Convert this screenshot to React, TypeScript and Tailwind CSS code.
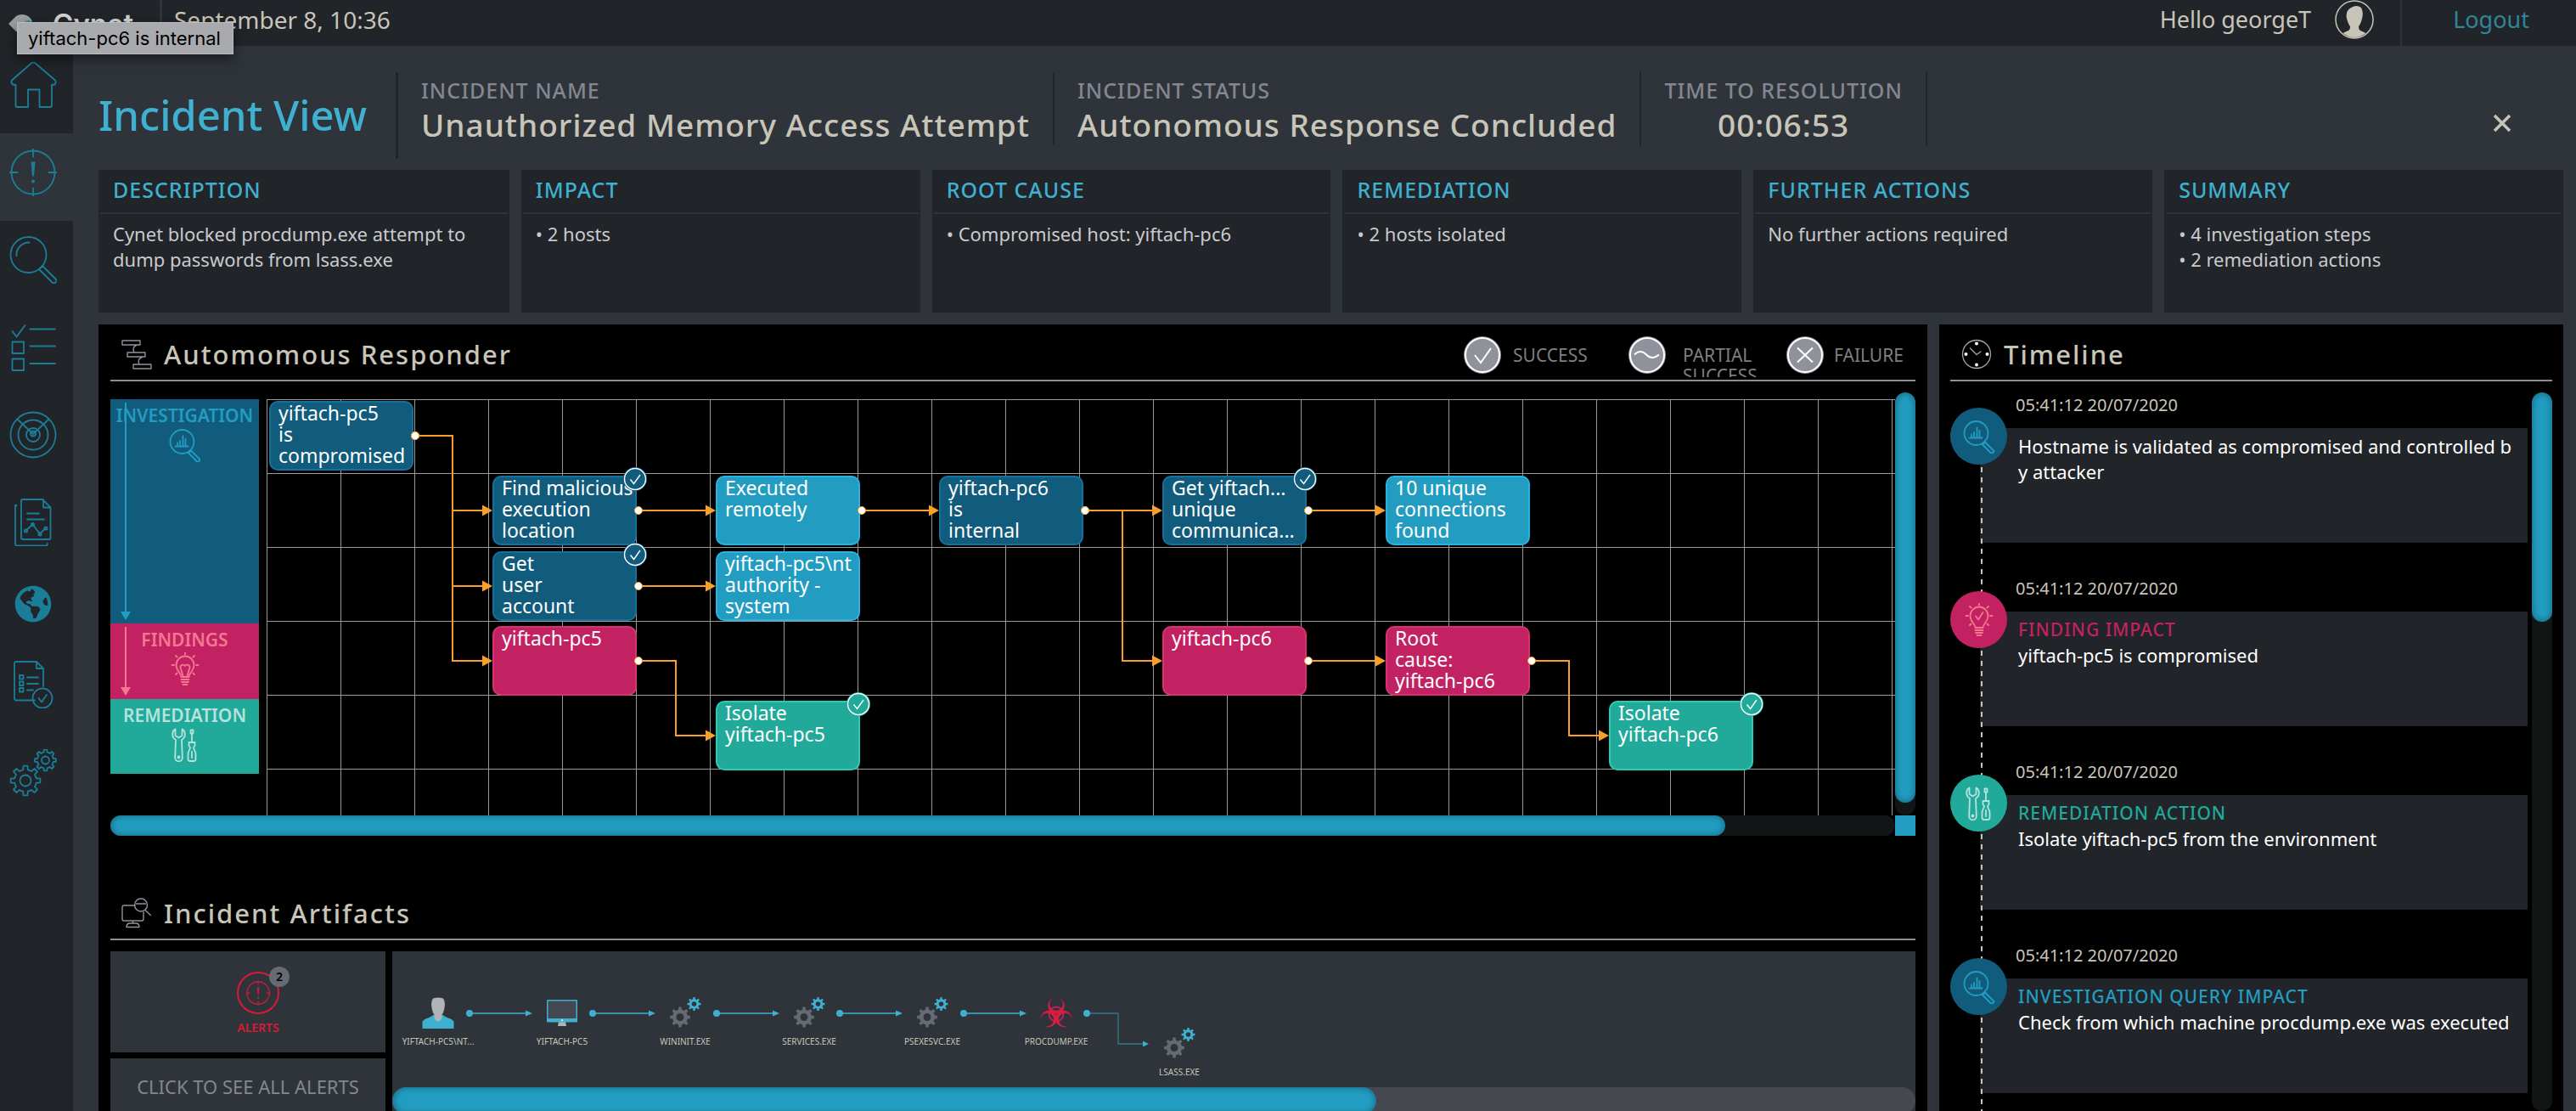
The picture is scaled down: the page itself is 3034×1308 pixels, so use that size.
import type { ReactNode } from "react";
import { FaGlobeAmericas } from "react-icons/fa";

/* ---------- icons ---------- */

function gearPath(cx: number, cy: number, outer: number, inner: number, teeth: number) {
  const step = (Math.PI * 2) / teeth;
  const point = (r: number, a: number) =>
    `${(cx + r * Math.sin(a)).toFixed(2)} ${(cy - r * Math.cos(a)).toFixed(2)}`;
  let d = "";
  for (let i = 0; i < teeth; i++) {
    const a = i * step;
    d += `${i === 0 ? "M" : "L"}${point(inner, a - step * 0.27)}`;
    d += `L${point(outer, a - step * 0.18)}L${point(outer, a + step * 0.18)}`;
    d += `L${point(inner, a + step * 0.27)}`;
    d += `A${inner} ${inner} 0 0 1 ${point(inner, a + step * 0.73)}`;
  }
  return d + "Z";
}

function ring(cx: number, cy: number, r: number) {
  return `M${cx - r} ${cy}a${r} ${r} 0 1 0 ${2 * r} 0a${r} ${r} 0 1 0 ${-2 * r} 0Z`;
}

function LineIcon({ children, box = 56, className }: { children: ReactNode; box?: number; className: string }) {
  return (
    <svg
      viewBox={`0 0 ${box} ${box}`}
      className={className}
      fill="none"
      stroke="currentColor"
      strokeWidth="1.8"
      strokeLinecap="round"
      strokeLinejoin="round"
      aria-hidden="true"
    >
      {children}
    </svg>
  );
}

function TargetShape() {
  return (
    <>
      <circle cx="28" cy="28" r="25.5" />
      <path d="M28 0.5v9M28 46.500v9M0.500 28h9M46.500 28h9" />
      <path d="M25.500 15.500h5l-1.500 17h-2z" fill="currentColor" stroke="none" />
      <circle cx="28" cy="38.500" r="2" fill="currentColor" stroke="none" />
    </>
  );
}

function ChartLensShape() {
  return (
    <>
      <circle cx="16.500" cy="16" r="14" />
      <path d="M8.500 21.500h15M11 20v-2.500M14 20v-5M17.500 20V9.500M20.500 20v-7" />
      <path d="M27 26.500l9.500 9.500a2 2 0 0 1-3 3L24 29.500z" />
    </>
  );
}

function BulbShape({ check = false }: { check?: boolean }) {
  return (
    <>
      <path d="M15.500 29c0-5-6-6.500-6-14a10.500 10.500 0 0 1 21 0c0 7.500-6 9-6 14z" />
      <path d="M15.500 32h9M16 35h8M17.500 38h5" />
      <path d="M20 2.500v-2.500M7 15H4.500M35.500 15H33M10.500 5.500L9 4M29.500 5.500L31 4M10.500 24.500L9 26M29.500 24.500L31 26" />
      {check ? <path d="M16 15.500l3 4 5.500-8.500" /> : <path d="M17.500 28l-3-10a3 3 0 0 1 5.500-2a3 3 0 0 1 5.500 2l-3 10" />}
    </>
  );
}

function ToolsShape() {
  return (
    <>
      <path d="M8.500 1.500v7.500l4 2.500 4-2.500V1.500c4 2 5 9-.5 12.500l.8 21a3.800 3.800 0 0 1-8.600 0L9 14c-5.500-3.500-4.500-10.500-.5-12.500z" />
      <circle cx="12.500" cy="34.500" r="1" />
      <path d="M28 17V7M26.500 2.500h3v4h-3zM24.500 17h7v4l-1.500 2c0 3 2.500 4 2.500 8v5.500a2.500 2.500 0 0 1-2.500 2.500h-4a2.500 2.500 0 0 1-2.500-2.500V31c0-4 2.500-5 2.500-8l-1.500-2zM28 28v7" />
    </>
  );
}

const sidebar: { name: string; height: string; icon: ReactNode }[] = [
  {
    name: "Home",
    height: "h-[103px]",
    icon: (
      <LineIcon className="size-14">
        <path d="M25.500 2.800Q28.500 0.500 31 2.800L54 22.500Q55.500 25 53.500 27.500L50 28V52Q50 54 48 54H35.500V33.500H22V54H9Q7.500 54 7.500 52V28L4 27.500Q1.500 25 3 22.500Z" />
      </LineIcon>
    ),
  },
  { name: "Alerts", height: "h-[103px]", icon: <LineIcon className="size-14"><TargetShape /></LineIcon> },
  {
    name: "Forensics",
    height: "h-[103px]",
    icon: (
      <LineIcon className="size-14">
        <circle cx="22.500" cy="22" r="21" />
        <path d="M8.500 23a14.500 14.500 0 0 1 15-15.500" />
        <path d="M39 35l15.500 15.500a2.800 2.800 0 0 1-4 4L35 39z" />
      </LineIcon>
    ),
  },
  {
    name: "Tasks",
    height: "h-[103px]",
    icon: (
      <LineIcon className="size-14">
        <path d="M3.500 9l5 6.500L18.500 2M24.500 6.500H54M24.500 26.500H54M24.500 47H54" />
        <path d="M3.500 21.500h13.500v13.500H3.500zM3.500 41.500h13.500V55H3.500z" />
      </LineIcon>
    ),
  },
  {
    name: "Radar",
    height: "h-[103px]",
    icon: (
      <LineIcon className="size-14">
        <circle cx="28" cy="28" r="26.500" />
        <circle cx="28" cy="28" r="17.500" />
        <circle cx="28" cy="28" r="8" />
        <circle cx="28" cy="26.500" r="3" />
        <path d="M28 27L9.500 9.500M28 27L46.500 9.500" />
      </LineIcon>
    ),
  },
  {
    name: "Reports",
    height: "h-[103px]",
    icon: (
      <LineIcon className="size-14">
        <path d="M15 1h24l9.500 9.500V46a2 2 0 0 1-2 2H16a2 2 0 0 1-2-2V2zM40 1v9.500h8.500" />
        <path d="M8.500 8H7v45.500a2 2 0 0 0 2 2h33.500q2.500 0 2.500-2.500" />
        <path d="M21 17.500h14M21 24.500h20" />
        <path d="M20 37l7.500-6.500 8.500 11 6-6" />
        <circle cx="19.500" cy="38" r="1.600" />
        <circle cx="27.500" cy="30.500" r="1.600" />
        <circle cx="36" cy="42" r="1.600" />
        <circle cx="43" cy="35" r="1.600" />
      </LineIcon>
    ),
  },
  { name: "Network", height: "h-[90px]", icon: <FaGlobeAmericas className="size-11" aria-hidden="true" /> },
  {
    name: "Audit",
    height: "h-[100px]",
    icon: (
      <LineIcon className="size-14">
        <path d="M30 46.500H8a2 2 0 0 1-2-2V3a2 2 0 0 1 2-2h24l8 8v21M32 1v8h8" />
        <path d="M12 17h4.500v4.500H12zM12 24.500h4.500V29H12zM12 32h4.500v4.500H12zM21 19.500h13M21 27h13M21 34.500h7" />
        <circle cx="39" cy="44" r="11.500" />
        <path d="M34.500 44l3.500 4.500 6-8.500" />
      </LineIcon>
    ),
  },
  {
    name: "Settings",
    height: "h-[108px]",
    icon: (
      <LineIcon className="size-14">
        <path d={gearPath(19, 37, 17.5, 13, 8)} />
        <circle cx="19" cy="37" r="6.500" />
        <path d={gearPath(42.500, 13, 12.500, 9.500, 8)} />
        <circle cx="42.500" cy="13" r="4.500" />
      </LineIcon>
    ),
  },
];

/* ---------- data ---------- */

const cards: { title: string; lines: string[] }[] = [
  { title: "DESCRIPTION", lines: ["Cynet blocked procdump.exe attempt to", "dump passwords from lsass.exe"] },
  { title: "IMPACT", lines: ["• 2 hosts"] },
  { title: "ROOT CAUSE", lines: ["• Compromised host: yiftach-pc6"] },
  { title: "REMEDIATION", lines: ["• 2 hosts isolated"] },
  { title: "FURTHER ACTIONS", lines: ["No further actions required"] },
  { title: "SUMMARY", lines: ["• 4 investigation steps", "• 2 remediation actions"] },
];

const tones = {
  navy: "bg-[#115b7c] border-[#15719b]",
  sky: "bg-[#229dc1] border-[#27b4e0]",
  pink: "bg-[#c22262] border-[#d93274]",
  teal: "bg-[#21a99a] border-[#28cdb8]",
};

const badgeTones = {
  navy: "text-[#115b7c]",
  sky: "text-[#229dc1]",
  pink: "text-[#c22262]",
  teal: "text-[#21a99a]",
};

type Tone = keyof typeof tones;

const COLS = [3, 266, 529, 792, 1055, 1318, 1581];
const ROWS = [2, 90, 179, 267, 355];

const nodes: { col: number; row: number; tone: Tone; lines: string[]; done?: boolean }[] = [
  { col: 0, row: 0, tone: "navy", lines: ["yiftach-pc5", "is", "compromised"] },
  { col: 1, row: 1, tone: "navy", lines: ["Find malicious", "execution", "location"], done: true },
  { col: 2, row: 1, tone: "sky", lines: ["Executed", "remotely"] },
  { col: 3, row: 1, tone: "navy", lines: ["yiftach-pc6", "is", "internal"] },
  { col: 4, row: 1, tone: "navy", lines: ["Get yiftach...", "unique", "communica..."], done: true },
  { col: 5, row: 1, tone: "sky", lines: ["10 unique", "connections", "found"] },
  { col: 1, row: 2, tone: "navy", lines: ["Get", "user", "account"], done: true },
  { col: 2, row: 2, tone: "sky", lines: ["yiftach-pc5\\nt", "authority -", "system"] },
  { col: 1, row: 3, tone: "pink", lines: ["yiftach-pc5"] },
  { col: 4, row: 3, tone: "pink", lines: ["yiftach-pc6"] },
  { col: 5, row: 3, tone: "pink", lines: ["Root", "cause:", "yiftach-pc6"] },
  { col: 2, row: 4, tone: "teal", lines: ["Isolate", "yiftach-pc5"], done: true },
  { col: 6, row: 4, tone: "teal", lines: ["Isolate", "yiftach-pc6"], done: true },
];

/* [from column, from row, to column, to row] */
const links: [number, number, number, number][] = [
  [0, 0, 1, 1],
  [0, 0, 1, 2],
  [0, 0, 1, 3],
  [1, 1, 2, 1],
  [1, 2, 2, 2],
  [1, 3, 2, 4],
  [2, 1, 3, 1],
  [3, 1, 4, 1],
  [3, 1, 4, 3],
  [4, 1, 5, 1],
  [4, 3, 5, 3],
  [5, 3, 6, 4],
];

const events: { tone: "navy" | "pink" | "teal"; title?: string; titleTone?: string; text: string }[] = [
  { tone: "navy", text: "Hostname is validated as compromised and controlled by attacker" },
  { tone: "pink", title: "FINDING IMPACT", titleTone: "text-[#c22262]", text: "yiftach-pc5 is compromised" },
  { tone: "teal", title: "REMEDIATION ACTION", titleTone: "text-[#21a99a]", text: "Isolate yiftach-pc5 from the environment" },
  {
    tone: "navy",
    title: "INVESTIGATION QUERY IMPACT",
    titleTone: "text-[#229dc1]",
    text: "Check from which machine procdump.exe was executed",
  },
];

const eventTones = {
  navy: "bg-[#115b7c] text-[#229dc1]",
  pink: "bg-[#c22262] text-[#f4788f]",
  teal: "bg-[#21a99a] text-[#b5e2dc]",
};

const processes: { label: string; x: number; y: number; kind: "user" | "host" | "gears" | "bio" }[] = [
  { label: "YIFTACH-PC5\\NT...", x: 54, y: 52, kind: "user" },
  { label: "YIFTACH-PC5", x: 200, y: 52, kind: "host" },
  { label: "WININIT.EXE", x: 345, y: 52, kind: "gears" },
  { label: "SERVICES.EXE", x: 491, y: 52, kind: "gears" },
  { label: "PSEXESVC.EXE", x: 636, y: 52, kind: "gears" },
  { label: "PROCDUMP.EXE", x: 782, y: 52, kind: "bio" },
  { label: "LSASS.EXE", x: 927, y: 88, kind: "gears" },
];

/* ---------- parts ---------- */

function TopBar() {
  return (
    <header className="flex h-[54px] bg-[#212428] text-[#c8c5b8]">
      <div className="flex w-[188px] items-start gap-[22px] pl-2.5 pt-2.5">
        <svg viewBox="0 0 30 34" className="mt-1.5 h-[34px] w-[30px]" aria-hidden="true">
          <path d="M0 12L9 3Q12 1 16 1Q24 1 28 9L22 12Q14 12 14 22L9 21Z" fill="#9c9ea0" />
          <circle cx="23" cy="12" r="4" fill="#2391ab" />
        </svg>
        <span className="font-[Inter,sans-serif] text-[33px] leading-9 font-semibold text-[#d0d2d3]">Cynet</span>
      </div>
      <div className="w-[3px] bg-[#2f343b]" />
      <time className="flex items-center pb-2 pl-3.5 text-[28px]">September 8, 10:36</time>
      <div className="ml-auto flex items-center gap-7 pr-[31px] pb-2 text-[27px]">
        <span>Hello georgeT</span>
        <svg viewBox="0 0 46 46" className="size-[46px]" aria-label="Profile" role="img">
          <clipPath id="avatar">
            <circle cx="23" cy="23" r="21" />
          </clipPath>
          <circle cx="23" cy="23" r="22" fill="none" stroke="#c8c5b8" strokeWidth="1.500" />
          <path
            d="M19 9q7-4 12 0q3 6 1 13q-2 7-4 9q0 4 2 5q9 3 11 8v4H5v-4q2-5 11-8q2-1 2-5q-2-2-4-9q-2-9 5-13z"
            fill="#c8c5b8"
            clipPath="url(#avatar)"
          />
        </svg>
      </div>
      <div className="w-0.5 bg-[#2f343b]" />
      <a href="#logout" className="flex items-center pr-[55px] pb-2 pl-[60px] text-[27px] text-[#318499]">
        Logout
      </a>
    </header>
  );
}

function Fact({ label, value, center = false }: { label: string; value: string; center?: boolean }) {
  return (
    <div
      className={`border-r-2 border-[#212428] px-[27px] pt-[5px] whitespace-nowrap ${center ? "text-center" : ""}`}
    >
      <div className="text-[25px] leading-8 font-medium tracking-[1px] text-[#84878f]">{label}</div>
      <div className="mt-px text-[37px] leading-[48px] font-medium tracking-[1px] text-[#c8c5b8]">{value}</div>
    </div>
  );
}

function PanelHeader({ icon, title, children }: { icon: ReactNode; title: string; children?: ReactNode }) {
  return (
    <div className="flex h-[67px] border-b-2 border-[#8a8f96]">
      <div className="flex items-center pt-1 pl-[13px]">
        {icon}
        <h2 className="pl-3.5 text-[31px] leading-[50px] font-medium tracking-[2px] text-[#c8c5b8]">{title}</h2>
      </div>
      {children}
    </div>
  );
}

function LegendItem({ label, width, pad, children }: { label: string; width: string; pad: string; children: ReactNode }) {
  return (
    <li className={`flex items-start ${width}`}>
      <svg viewBox="0 0 44 44" className="size-11 shrink-0" fill="none" stroke="#fff" strokeWidth="2" aria-hidden="true">
        <circle cx="22" cy="22" r="22" fill="#8f929a" stroke="none" />
        <circle cx="22" cy="22" r="20" />
        {children}
      </svg>
      <span className={`mt-2.5 h-[38px] overflow-hidden text-[21px] leading-6 text-[#7f7f7f] ${pad}`}>{label}</span>
    </li>
  );
}

function Lane({ label, tone, icon, arrow }: { label: string; tone: string; icon: ReactNode; arrow?: boolean }) {
  return (
    <div className={`relative flex flex-col items-center pt-1 ${tone}`}>
      {arrow && (
        <div className="absolute top-1 bottom-1 left-3 flex w-3 flex-col items-center">
          <div className="w-0.5 flex-1 bg-current" />
          <svg viewBox="0 0 12 10" className="h-2.5 w-3" aria-hidden="true">
            <path d="M0 0h12L6 10z" fill="currentColor" />
          </svg>
        </div>
      )}
      <span className="text-[21px] leading-[30px] font-semibold">{label}</span>
      {icon}
    </div>
  );
}

function FlowGraph() {
  return (
    <div className="relative min-w-0 flex-1 overflow-hidden bg-[linear-gradient(#9a9a9a_1px,transparent_1px),linear-gradient(90deg,#9a9a9a_1px,transparent_1px)] bg-[size:87px_87px]">
      {nodes.map((n) => (
        <button
          key={`${n.col}-${n.row}`}
          type="button"
          className={`absolute h-[82px] w-[170px] rounded-[10px] border-2 pl-[9px] text-left align-top text-[23px] leading-[25px] whitespace-nowrap text-white ${tones[n.tone]}`}
          style={{ left: COLS[n.col], top: ROWS[n.row] }}
        >
          <span className="flex h-full flex-col">
            {n.lines.map((line) => (
              <span key={line}>{line}</span>
            ))}
          </span>
          {n.done && (
            <svg viewBox="0 0 28 28" className={`absolute -top-3 -right-3.5 size-7 ${badgeTones[n.tone]}`} aria-label="Success">
              <circle cx="14" cy="14" r="14" fill="currentColor" />
              <circle cx="14" cy="14" r="12.500" fill="none" stroke="#fff" strokeWidth="1.400" />
              <path d="M8.500 14.500l4 5L20 9" fill="none" stroke="#fff" strokeWidth="1.400" />
            </svg>
          )}
        </button>
      ))}
      <svg className="pointer-events-none absolute inset-0 size-full" fill="none" aria-hidden="true">
        {links.map(([c1, r1, c2, r2]) => {
          const x1 = COLS[c1] + 172;
          const y1 = ROWS[r1] + 41;
          const x2 = COLS[c2];
          const y2 = ROWS[r2] + 41;
          const bend = x1 + 44;
          return (
            <g key={`${c1}${r1}${c2}${r2}`}>
              <path d={`M${x1} ${y1}H${bend}V${y2}H${x2 - 10}`} stroke="#fb9f2b" strokeWidth="2" />
              <path d={`M${x2 - 12} ${y2 - 6.500}L${x2} ${y2}L${x2 - 12} ${y2 + 6.500}Z`} fill="#fb9f2b" />
              <circle cx={x1} cy={y1} r="4.500" fill="#fff" stroke="#fb9f2b" />
            </g>
          );
        })}
      </svg>
    </div>
  );
}

function Responder() {
  return (
    <section>
      <PanelHeader
        title="Automomous Responder"
        icon={
          <LineIcon box={36} className="size-9 text-[#8f929a]">
            <path d="M1 2h21v5H1zM7 16h21v5H7zM14 30h21v5H14zM18 7q-6 3-3 9M25 21q-7 3-4 9" strokeWidth="1.400" />
          </LineIcon>
        }
      >
        <ul className="ml-auto flex pt-3.5">
          <LegendItem label="SUCCESS" width="w-[194px]" pad="pl-3.5">
            <path d="M13 22l7 9L32 14" />
          </LegendItem>
          <LegendItem label="PARTIAL SUCCESS" width="w-[186px]" pad="w-[120px] pl-5">
            <path d="M7 21.500q7-7 14 0t15 0" />
          </LegendItem>
          <LegendItem label="FAILURE" width="w-[152px]" pad="pl-3">
            <path d="M13 13.500l18 17M31 13.500l-18 17" />
          </LegendItem>
        </ul>
      </PanelHeader>
      <div className="mt-[13px] flex">
        <div className="min-w-0 flex-1">
          <div className="flex h-[498px] gap-[9px] pt-2">
            <div className="grid w-[175px] grid-rows-[264px_89px_88px] content-start">
              <Lane
                label="INVESTIGATION"
                tone="bg-[#115b7c] text-[#229dc1]"
                arrow
                icon={<LineIcon box={40} className="size-10"><ChartLensShape /></LineIcon>}
              />
              <Lane
                label="FINDINGS"
                tone="bg-[#c22262] text-[#f4788f]"
                arrow
                icon={<LineIcon box={40} className="size-10"><BulbShape /></LineIcon>}
              />
              <Lane
                label="REMEDIATION"
                tone="bg-[#21a99a] text-[#b5e2dc]"
                icon={<LineIcon box={40} className="size-10"><ToolsShape /></LineIcon>}
              />
            </div>
            <FlowGraph />
          </div>
          <div className="h-6 rounded-xl bg-[#111515]">
            <div className="h-6 w-[90.5%] rounded-xl bg-[#229dc1] shadow-[inset_0_0_8px_rgba(0,0,0,0.4)]" />
          </div>
        </div>
        <div className="w-6">
          <div className="h-[498px] rounded-xl bg-[#111515]">
            <div className="h-[97%] rounded-xl bg-[#229dc1] shadow-[inset_0_0_8px_rgba(0,0,0,0.4)]" />
          </div>
          <div className="h-6 bg-[#229dc1]" />
        </div>
      </div>
    </section>
  );
}

function ProcessIcon({ kind }: { kind: "user" | "host" | "gears" | "bio" }) {
  return (
    <svg viewBox="0 0 40 40" className="size-10" aria-hidden="true">
      {kind === "user" && (
        <>
          <path d="M1.500 39v-8q1-3 8-5l5-3h11l5 3q7 2 8 5v8z" fill="#3fb0cf" />
          <path d="M14 3.500q6-2 12 0q3 4 1.500 11q-1 6-3 8v4.500q-4.500 7-9 0v-4.500q-2-2-3-8q-1.500-7 1.500-11z" fill="#b0b3b8" />
        </>
      )}
      {kind === "host" && (
        <>
          <path d="M16 31h8l1 5H15z" fill="#b0b3b8" />
          <rect x="2" y="5" width="36" height="26.500" rx="1" fill="#3fb0cf" />
          <rect x="3.500" y="6.500" width="33" height="20.500" fill="#434851" />
          <circle cx="20" cy="29.200" r="1" fill="#fff" />
        </>
      )}
      {kind === "gears" && (
        <>
          <path d={gearPath(14, 25.5, 12, 9, 8) + ring(14, 25.5, 4.5)} fill="#666a72" fillRule="evenodd" />
          <path d={gearPath(30.500, 10, 8, 5.800, 8) + ring(30.500, 10, 2.800)} fill="#3fb0cf" fillRule="evenodd" />
        </>
      )}
      {kind === "bio" && (
        <>
          <circle cx="20" cy="22" r="8.500" fill="none" stroke="#c2205f" strokeWidth="1.800" />
          {[0, 120, 240].map((turn) => (
            <path
              key={turn}
              d="M16 3.200A9.700 9.700 0 1 0 24 3.200A7.800 7.800 0 1 1 16 3.200Z"
              transform={`rotate(${turn} 20 22.300)`}
              fill="#d61c3f"
            />
          ))}
        </>
      )}
    </svg>
  );
}

function Artifacts() {
  return (
    <section className="mt-14">
      <PanelHeader
        title="Incident Artifacts"
        icon={
          <LineIcon box={36} className="size-9 text-[#8f929a]">
            <path
              d="M16 9H3a2 2 0 0 0-2 2v14a2 2 0 0 0 2 2h21a2 2 0 0 0 2-2v-8M13.500 27v3M6 34.500q0-4.500 4-4.500h7q4 0 4 4.500zM17.500 7h11M28 14.500l6.500 6"
              strokeWidth="1.400"
            />
            <circle cx="23" cy="8.500" r="7.500" strokeWidth="1.400" />
          </LineIcon>
        }
      />
      <div className="mt-[13px] flex gap-2">
        <div className="flex w-[324px] flex-col gap-[7px]">
          <button
            type="button"
            className="flex h-[119px] flex-col items-center bg-[#2f343b] pt-6 pl-6 text-[#d91a36]"
          >
            <span className="relative">
              <svg viewBox="0 0 50 50" className="size-[50px]" fill="none" stroke="currentColor" aria-hidden="true">
                <circle cx="25" cy="25" r="24" strokeWidth="2" />
                <g transform="translate(10.500 10.500) scale(0.520)" strokeWidth="2.400">
                  <TargetShape />
                </g>
              </svg>
              <span className="absolute -top-1.5 -right-3 flex size-6 items-center justify-center rounded-full bg-[#666a72] text-sm font-semibold text-black">
                2
              </span>
            </span>
            <span className="mt-1.5 text-sm leading-5 font-semibold">ALERTS</span>
          </button>
          <button type="button" className="h-[66px] bg-[#2f343b] text-[22px] text-[#84878f]">
            CLICK TO SEE ALL ALERTS
          </button>
        </div>
        <div className="min-w-0 flex-1 bg-[#2f343b]">
          <div className="relative h-40 overflow-hidden">
            <svg className="absolute inset-0 size-full" fill="none" aria-hidden="true">
              {[91, 236, 382, 527, 673].map((x) => (
                <g key={x}>
                  <circle cx={x} cy="73" r="4" fill="#3fb0cf" />
                  <path d={`M${x} 73h68`} stroke="#3fb0cf" strokeWidth="1.500" />
                  <path d={`M${x + 66} 69.500l8 3.500l-8 3.500z`} fill="#3fb0cf" />
                </g>
              ))}
              <path d="M818 73h37v36h30" stroke="#30788d" strokeWidth="1.300" />
              <circle cx="818" cy="73" r="4" fill="#3fb0cf" />
              <path d="M884 105.500l7 3.500l-7 3.500z" fill="#3fb0cf" />
            </svg>
            {processes.map((p) => (
              <figure
                key={p.label}
                className="absolute flex w-28 -translate-x-1/2 flex-col items-center"
                style={{ left: p.x, top: p.y }}
              >
                <ProcessIcon kind={p.kind} />
                <figcaption className="mt-1.5 text-[10px] leading-4 whitespace-nowrap text-[#c8c5b8]">{p.label}</figcaption>
              </figure>
            ))}
          </div>
          <div className="h-8 rounded-2xl bg-[#45484f]">
            <div className="h-8 w-[64.6%] rounded-2xl bg-[#229dc1] shadow-[inset_0_0_8px_rgba(0,0,0,0.4)]" />
          </div>
        </div>
      </div>
    </section>
  );
}

function Timeline() {
  return (
    <section className="flex w-[735px] flex-col bg-black px-[13px]">
      <PanelHeader
        title="Timeline"
        icon={
          <LineIcon box={36} className="size-9 text-[#a3a5ab]">
            <circle cx="18" cy="18" r="16.500" strokeWidth="1.300" />
            <path d="M10.500 11l7.500 7.500L23 15" strokeWidth="1.300" />
            <g fill="#fff" stroke="none">
              <circle cx="18" cy="5.500" r="2" />
              <circle cx="18" cy="30.500" r="2" />
              <circle cx="5.500" cy="18" r="2" />
              <circle cx="30.500" cy="18" r="2" />
            </g>
          </LineIcon>
        }
      />
      <div className="mt-[13px] flex min-h-0 flex-1">
        <ol className="relative min-w-0 flex-1">
          {events.map((e, i) => (
            <li key={i} className="relative h-[216px]">
              <time className="block pl-[77px] text-xl leading-[30px] text-[#c8c5b8]">05:41:12 20/07/2020</time>
              <div className="mt-3 mr-[5px] ml-[35px] h-[135px] bg-[#212428] pt-1.5 pr-[15px] pl-[45px]">
                {e.title && (
                  <h3 className={`text-[21px] leading-[30px] font-medium tracking-[1px] ${e.titleTone}`}>{e.title}</h3>
                )}
                <p className="text-[22px] leading-[30px] break-all text-white">{e.text}</p>
              </div>
            </li>
          ))}
          <li
            aria-hidden="true"
            className="absolute top-10 bottom-0 left-9 w-0.5 bg-[repeating-linear-gradient(#c8c5b8_0_6px,transparent_6px_12px)]"
          />
          {events.map((e, i) => (
            <li
              key={`dot-${i}`}
              className={`absolute left-0 flex size-[67px] items-center justify-center rounded-full ${eventTones[e.tone]}`}
              style={{ top: 18 + i * 216 }}
            >
              <LineIcon box={40} className="size-10">
                {e.tone === "navy" && <ChartLensShape />}
                {e.tone === "pink" && <BulbShape check />}
                {e.tone === "teal" && <ToolsShape />}
              </LineIcon>
            </li>
          ))}
        </ol>
        <div className="w-6 rounded-xl bg-[#111515]">
          <div className="h-[270px] rounded-xl bg-[#229dc1] shadow-[inset_0_0_8px_rgba(0,0,0,0.4)]" />
        </div>
      </div>
    </section>
  );
}

export default function App() {
  return (
    <div className="relative flex h-screen flex-col overflow-hidden bg-[#2f343b] font-['Noto_Sans',sans-serif]">
      <TopBar />
      <div className="flex min-h-0 flex-1">
        <nav className="w-[86px] shrink-0 bg-[#212428]">
          {sidebar.map((item) => (
            <a
              key={item.name}
              href={`#${item.name.toLowerCase()}`}
              aria-label={item.name}
              className={`flex items-center justify-center pr-2 pb-3 text-[#1b7e98] ${item.height} ${item.name === "Alerts" ? "bg-[#2f343b]" : ""}`}
            >
              {item.icon}
            </a>
          ))}
        </nav>
        <main className="flex min-w-0 flex-1 flex-col pr-[15px] pl-[30px]">
          <div className="flex h-[146px] shrink-0 items-start pt-[31px]">
            <h1 className="flex h-[102px] w-[353px] items-center border-r-[3px] border-[#212428] text-[49px] font-medium whitespace-nowrap text-[#3fb0cf]">
              Incident View
            </h1>
            <Fact label="INCIDENT NAME" value="Unauthorized Memory Access Attempt" />
            <Fact label="INCIDENT STATUS" value="Autonomous Response Concluded" />
            <Fact label="TIME TO RESOLUTION" value="00:06:53" center />
            <button type="button" aria-label="Close" className="mt-[49px] mr-[61px] ml-auto text-[#c8c5b8]">
              <svg viewBox="0 0 22 22" className="size-[22px]" aria-hidden="true">
                <path d="M2 2l18 18M20 2L2 20" stroke="currentColor" strokeWidth="3.500" />
              </svg>
            </button>
          </div>
          <div className="grid shrink-0 grid-cols-[484fr_repeat(5,470fr)] gap-3.5">
            {cards.map((c) => (
              <section key={c.title} className="h-[168px] bg-[#212428]">
                <h2 className="mx-0.5 border-b-2 border-[#2f343b] px-[15px] pt-[7px] pb-[11px] text-[25px] leading-8 font-medium tracking-[1px] text-[#3fb0cf]">
                  {c.title}
                </h2>
                <div className="px-[17px] pt-2 text-[22px] leading-[30px] text-[#c9cacd]">
                  {c.lines.map((line) => (
                    <p key={line} className="whitespace-nowrap">
                      {line}
                    </p>
                  ))}
                </div>
              </section>
            ))}
          </div>
          <div className="mt-3.5 flex min-h-0 flex-1 gap-3.5">
            <div className="min-w-0 flex-1 bg-black px-3.5">
              <Responder />
              <Artifacts />
            </div>
            <Timeline />
          </div>
        </main>
      </div>
      <div
        role="tooltip"
        className="absolute top-[26px] left-5 border border-[#b9bbbf] bg-[#a8aaae] pr-3.5 pl-3 font-[Inter,sans-serif] text-[22px] leading-9 text-black shadow-[0_6px_16px_rgba(0,0,0,0.45)]"
      >
        yiftach-pc6 is internal
      </div>
    </div>
  );
}
